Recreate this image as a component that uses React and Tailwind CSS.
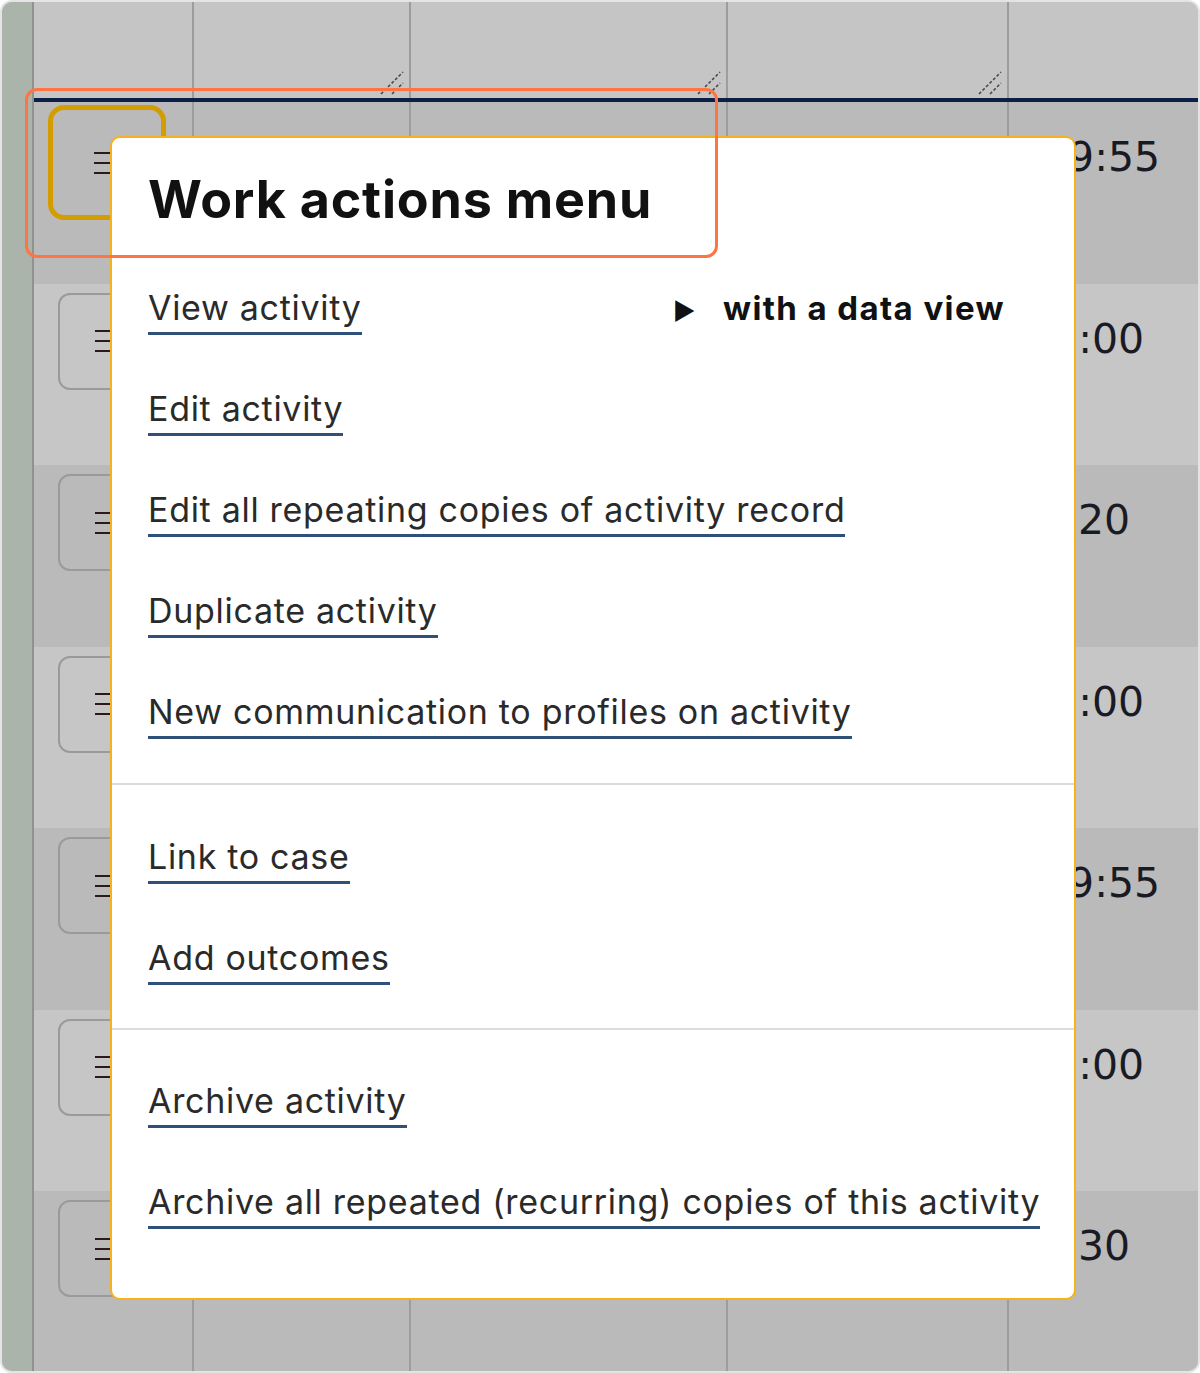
import React from 'react';

const ROWS = [
    { time: '09:55', bg: 'bg-[#bababa]', pad: 'pl-[33px]', focus: true },
    { time: '10:00', bg: 'bg-[#c6c6c6]', pad: 'pl-[17px]' },
    { time: '10:20', bg: 'bg-[#bababa]', pad: 'pl-[3px]' },
    { time: '11:00', bg: 'bg-[#c6c6c6]', pad: 'pl-[17px]' },
    { time: '09:55', bg: 'bg-[#bababa]', pad: 'pl-[33px]' },
    { time: '12:00', bg: 'bg-[#c6c6c6]', pad: 'pl-[17px]' },
    { time: '10:30', bg: 'bg-[#bababa]', pad: 'pl-[3px]' },
];

const GROUPS = [
    ['View activity', 'Edit activity', 'Edit all repeating copies of activity record', 'Duplicate activity', 'New communication to profiles on activity'],
    ['Link to case', 'Add outcomes'],
    ['Archive activity', 'Archive all repeated (recurring) copies of this activity'],
];

function Grip() {
    return (
        <svg width="26" height="26" viewBox="0 0 26 26" className="absolute right-[4px] bottom-[2px]">
            <path d="M2 24 L24 2" stroke="#4a4a4a" strokeWidth="1.6" strokeDasharray="3 2" />
            <path d="M13 24 L24 13" stroke="#4a4a4a" strokeWidth="1.6" strokeDasharray="3 2" />
        </svg>
    );
}

function Burger() {
    return (
        <div className="flex flex-col gap-[8px] w-[26px]">
            <span className="h-[2px] bg-[#2a1a1a]" />
            <span className="h-[2px] bg-[#2a1a1a]" />
            <span className="h-[2px] bg-[#2a1a1a]" />
        </div>
    );
}

function MenuItem({ label }) {
    return (
        <div className="flex items-baseline">
            <span className="inline-block whitespace-nowrap leading-[40px] pb-[4px] border-b-[3px] border-[#2f5078] text-[34px] tracking-[0.7px] text-[#2a2a2a]">
                {label}
            </span>
            {label === 'View activity' && (
                <span className="ml-auto mr-[51px] flex items-baseline gap-[26px] text-[33px] tracking-[1.4px] font-bold text-[#111]">
                    <span className="text-[24px]">▶</span>
                    with a data view
                </span>
            )}
        </div>
    );
}

export default function App() {
    const cell = 'relative border-r-2 border-[#9d9d9d] shrink-0';
    return (
        <div className="w-[1200px] h-[1373px] bg-white" style={{ fontFamily: 'Inter, "Noto Sans", sans-serif' }}>
            <div className="relative w-full h-full rounded-[12px] border-2 border-[#e4e4e6] overflow-hidden flex bg-[#c5c5c5]">
                {/* left strip */}
                <div className="w-[30px] bg-[#aab4aa] shrink-0" />
                <div className="w-[2px] bg-[#8e938e] shrink-0" />

                <div className="flex-1 flex flex-col">
                    {/* header */}
                    <div className="flex h-[96px] bg-[#c5c5c5] shrink-0">
                        <div className={`${cell} w-[160px]`} />
                        <div className={`${cell} w-[217px]`}><Grip /></div>
                        <div className={`${cell} w-[317px]`}><Grip /></div>
                        <div className={`${cell} w-[281px]`}><Grip /></div>
                        <div className="flex-1" />
                    </div>
                    <div className="h-[4px] bg-[#0c1f45] shrink-0" />

                    {ROWS.map((r, i) => (
                        <div key={i} className={`flex h-[181.5px] shrink-0 ${r.bg}`}>
                            <div className={`${cell} w-[160px] pl-[24px] pt-[9px]`}>
                                {r.focus ? (
                                    <div className="-ml-[10px] -mt-[6px] w-[118px] h-[115px] rounded-[16px] border-[5px] border-[#d39c00] flex items-center justify-center">
                                        <Burger />
                                    </div>
                                ) : (
                                    <div className="w-[100px] h-[97px] rounded-[12px] border-2 border-[#9a9a9a] flex items-center justify-center">
                                        <Burger />
                                    </div>
                                )}
                            </div>
                            <div className={`${cell} w-[217px]`} />
                            <div className={`${cell} w-[317px]`} />
                            <div className={`${cell} w-[281px]`} />
                            <div className={`flex-1 pt-[31px] ${r.pad}`}>
                                <span className="text-[41px] leading-[48px] text-[#1a1a24]" style={{ fontFamily: '"DejaVu Sans", sans-serif' }}>
                                    {r.time}
                                </span>
                            </div>
                        </div>
                    ))}
                </div>

                {/* dropdown menu */}
                <div className="absolute left-[108px] top-[134px] w-[966px] h-[1164px] bg-white border-2 border-[#f7b21b] rounded-[10px] flex flex-col">
                    <div className="px-[36px] pt-[31px]">
                        <h2 className="text-[52px] leading-[62px] font-bold tracking-[0.8px] text-[#111]">Work actions menu</h2>
                    </div>
                    {GROUPS.map((g, gi) => (
                        <div
                            key={gi}
                            className={
                                gi === 0
                                    ? 'pl-[36px] pr-[18px] pt-[53px] pb-[44px] flex flex-col gap-[54px] border-b-2 border-[#dcdcdc]'
                                    : gi === 1
                                        ? 'pl-[36px] pr-[18px] pt-[52px] pb-[43px] flex flex-col gap-[54px] border-b-2 border-[#dcdcdc]'
                                        : 'pl-[36px] pr-[18px] pt-[51px] flex flex-col gap-[54px]'
                            }
                        >
                            {g.map(label => <MenuItem key={label} label={label} />)}
                        </div>
                    ))}
                </div>

                {/* highlight annotation */}
                <div className="absolute left-[23px] top-[86px] w-[693px] h-[170px] rounded-[12px] border-[3px] border-[#ff7443]" />
            </div>
        </div>
    );
}
